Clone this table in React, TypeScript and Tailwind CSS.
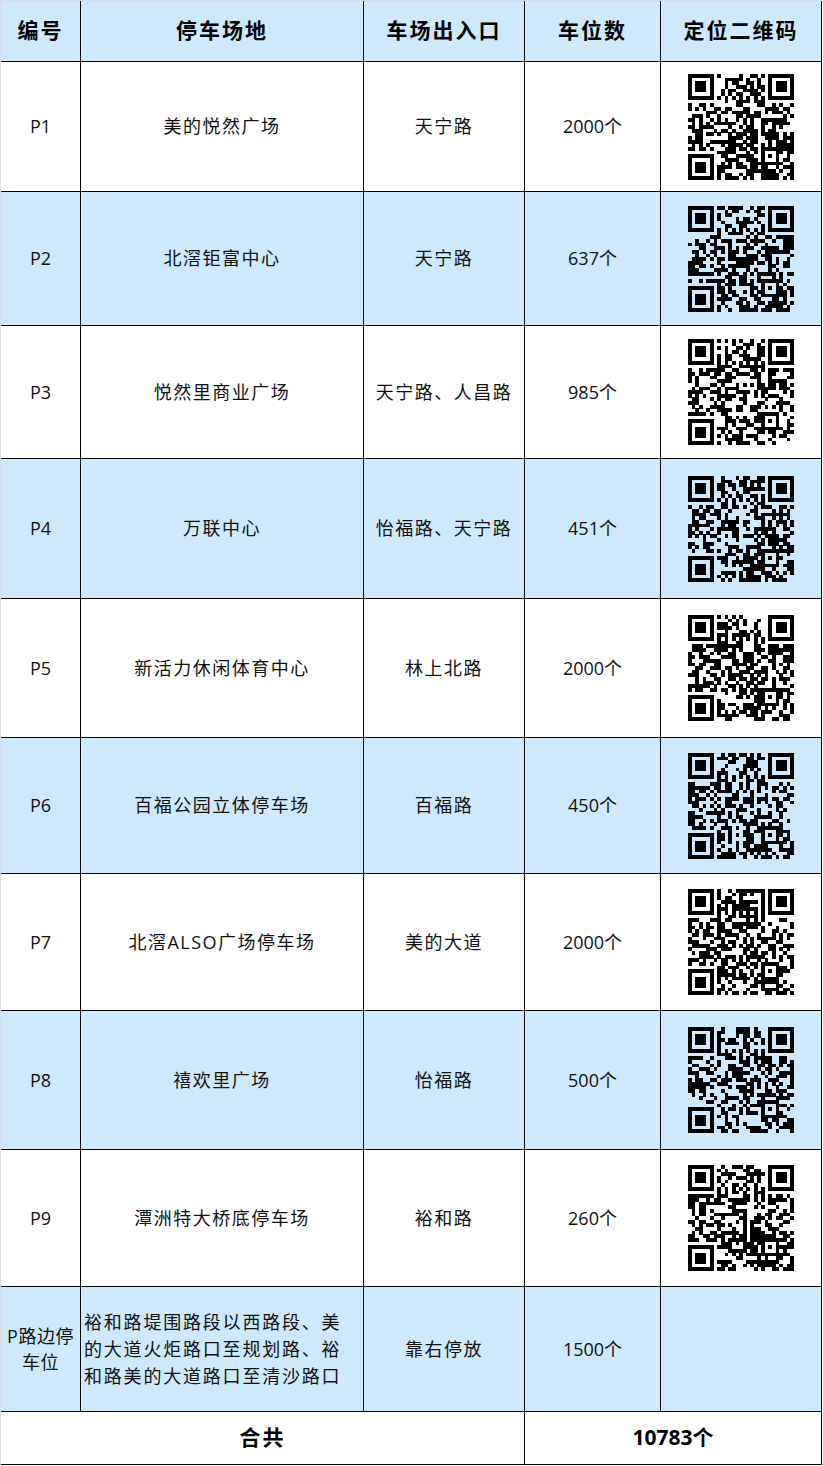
import React from 'react'

const N = 29

// small seeded random so every QR looks different but stays the same between renders
function rng(seed: number) {
  let a = seed >>> 0
  return () => {
    a = (a + 0x6d2b79f5) >>> 0
    let t = a
    t = Math.imul(t ^ (t >>> 15), t | 1)
    t ^= t + Math.imul(t ^ (t >>> 7), t | 61)
    return ((t ^ (t >>> 14)) >>> 0) / 4294967296
  }
}

function buildQr(seed: number) {
  const rand = rng(seed)
  const m: boolean[][] = []
  const fixed: boolean[][] = []
  for (let y = 0; y < N; y++) {
    m.push(new Array(N).fill(false))
    fixed.push(new Array(N).fill(false))
  }
  const finder = (ox: number, oy: number) => {
    for (let y = -1; y <= 7; y++) {
      for (let x = -1; x <= 7; x++) {
        const px = ox + x
        const py = oy + y
        if (px < 0 || py < 0 || px >= N || py >= N) continue
        fixed[py][px] = true
        const inside = x >= 0 && x <= 6 && y >= 0 && y <= 6
        const ring = x === 0 || x === 6 || y === 0 || y === 6
        const core = x >= 2 && x <= 4 && y >= 2 && y <= 4
        m[py][px] = inside && (ring || core)
      }
    }
  }
  finder(0, 0)
  finder(N - 7, 0)
  finder(0, N - 7)
  // timing
  for (let i = 8; i < N - 8; i++) {
    fixed[6][i] = true
    fixed[i][6] = true
    m[6][i] = i % 2 === 0
    m[i][6] = i % 2 === 0
  }
  // alignment
  for (let y = -2; y <= 2; y++) {
    for (let x = -2; x <= 2; x++) {
      const px = 22 + x
      const py = 22 + y
      fixed[py][px] = true
      m[py][px] = Math.max(Math.abs(x), Math.abs(y)) !== 1
    }
  }
  for (let y = 0; y < N; y++) {
    for (let x = 0; x < N; x++) {
      if (!fixed[y][x]) m[y][x] = rand() < 0.52
    }
  }
  return m
}

function QrCode({ seed }: { seed: number }) {
  const m = buildQr(seed)
  const cells: React.ReactElement[] = []
  m.forEach((row, y) =>
    row.forEach((on, x) => {
      if (on) cells.push(<rect key={`${x}-${y}`} x={x} y={y} width={1.02} height={1.02} />)
    })
  )
  return (
    <svg width="106" height="106" viewBox="0 0 29 29" shapeRendering="crispEdges" fill="#000">
      {cells}
    </svg>
  )
}

const rows = [
  { id: 'P1', name: '美的悦然广场', gate: '天宁路', spaces: '2000个', h: 'h-[130px]', blue: false, seed: 11 },
  { id: 'P2', name: '北滘钜富中心', gate: '天宁路', spaces: '637个', h: 'h-[134px]', blue: true, seed: 23 },
  { id: 'P3', name: '悦然里商业广场', gate: '天宁路、人昌路', spaces: '985个', h: 'h-[133px]', blue: false, seed: 37 },
  { id: 'P4', name: '万联中心', gate: '怡福路、天宁路', spaces: '451个', h: 'h-[140px]', blue: true, seed: 41 },
  { id: 'P5', name: '新活力休闲体育中心', gate: '林上北路', spaces: '2000个', h: 'h-[139px]', blue: false, seed: 53 },
  { id: 'P6', name: '百福公园立体停车场', gate: '百福路', spaces: '450个', h: 'h-[136px]', blue: true, seed: 67 },
  { id: 'P7', name: '北滘ALSO广场停车场', gate: '美的大道', spaces: '2000个', h: 'h-[137px]', blue: false, seed: 79 },
  { id: 'P8', name: '禧欢里广场', gate: '怡福路', spaces: '500个', h: 'h-[139px]', blue: true, seed: 83 },
  { id: 'P9', name: '潭洲特大桥底停车场', gate: '裕和路', spaces: '260个', h: 'h-[137px]', blue: false, seed: 97 },
]

const grid = 'grid grid-cols-[80px_283px_161px_136px_161px]'
const cell = 'flex items-center justify-center border-r border-b border-black'

export default function App() {
  return (
    <div className="w-[823px] min-h-[1466px] bg-white font-['Open_Sans','Noto_Sans_CJK_SC',sans-serif] text-[#111]">
      <div className="w-[822px] border-l border-t border-[#d6dde8]">
        {/* header */}
        <div className={`${grid} h-[61px] bg-[#cde9fb] text-[21px] font-bold tracking-[2px] text-black`}>
          <div className={cell}>编号</div>
          <div className={cell}>停车场地</div>
          <div className={cell}>车场出入口</div>
          <div className={cell}>车位数</div>
          <div className={cell}>定位二维码</div>
        </div>

        {rows.map((r) => (
          <div
            key={r.id}
            className={`${grid} ${r.h} ${r.blue ? 'bg-[#cde9fb]' : 'bg-white'} text-[18px] tracking-[1.5px]`}
          >
            <div className={`${cell} tracking-normal`}>{r.id}</div>
            <div className={cell}>{r.name}</div>
            <div className={cell}>{r.gate}</div>
            <div className={`${cell} tracking-normal`}>{r.spaces}</div>
            <div className={cell}>
              <QrCode seed={r.seed} />
            </div>
          </div>
        ))}

        {/* roadside parking */}
        <div className={`${grid} h-[125px] bg-[#cde9fb] text-[18px] tracking-[1.5px]`}>
          <div className={`${cell} text-center leading-[26px] tracking-[0.5px]`}>
            P路边停
            <br />
            车位
          </div>
          <div className="flex items-center border-r border-b border-black pl-[3px] leading-[27px] whitespace-nowrap tracking-[1.8px]">
            <div>
              裕和路堤围路段以西路段、美
              <br />
              的大道火炬路口至规划路、裕
              <br />
              和路美的大道路口至清沙路口
            </div>
          </div>
          <div className={cell}>靠右停放</div>
          <div className={`${cell} tracking-normal`}>1500个</div>
          <div className={cell}></div>
        </div>

        {/* total */}
        <div className="grid grid-cols-[524px_297px] h-[53px] bg-white text-[21px] font-bold text-black">
          <div className={`${cell} tracking-[2px]`}>合共</div>
          <div className={`${cell} tracking-normal`}>10783个</div>
        </div>
      </div>
    </div>
  )
}
